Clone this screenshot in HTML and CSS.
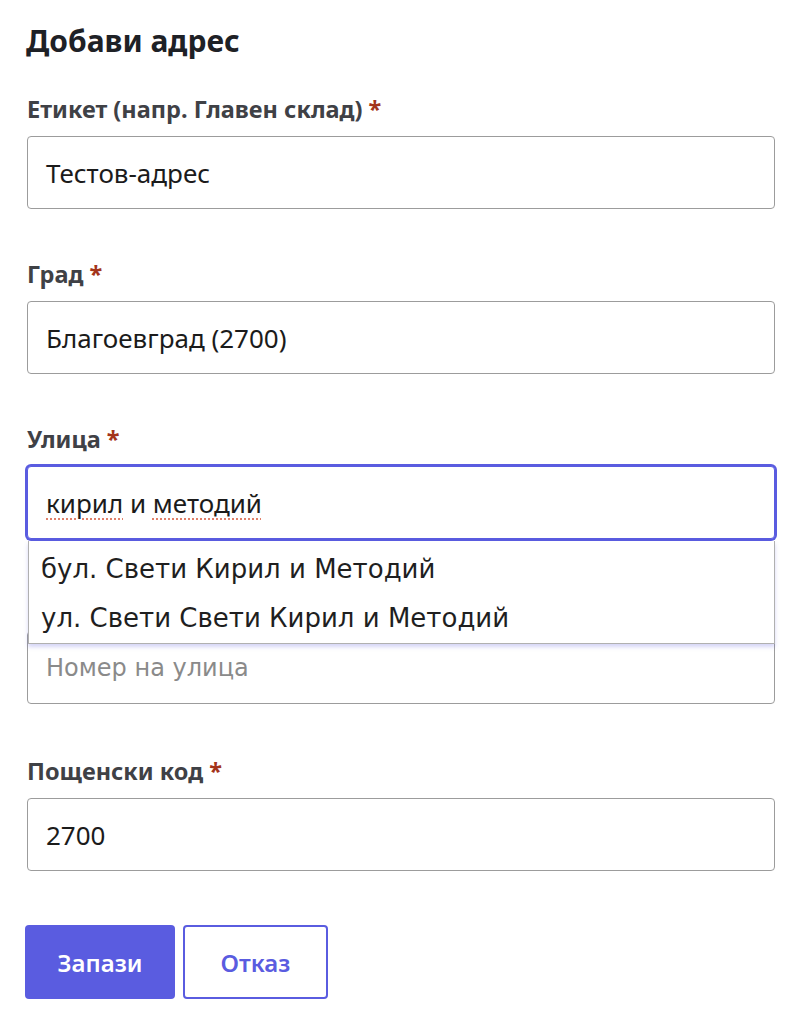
FILE: index.html
```html
<!DOCTYPE html>
<html lang="bg">
<head>
<meta charset="utf-8">
<title>Добави адрес</title>
<link rel="stylesheet" href="styles.css">
</head>
<body>
<form class="form">
  <h1 class="title">Добави адрес</h1>

  <div class="field">
    <label class="label">Етикет (напр. Главен склад) <span class="req">*</span></label>
    <div class="input"><span class="value">Тестов-адрес</span></div>
  </div>

  <div class="field">
    <label class="label">Град <span class="req">*</span></label>
    <div class="input"><span class="value">Благоевград (2700)</span></div>
  </div>

  <div class="field field-street">
    <label class="label">Улица <span class="req">*</span></label>
    <div class="input input-focus"><span class="value"><span class="spell">кирил</span> и <span class="spell">методий</span></span></div>
    <ul class="suggest" lang="ru">
      <li class="suggest-item">бул. Свети Кирил и Методий</li>
      <li class="suggest-item">ул. Свети Свети Кирил и Методий</li>
    </ul>
  </div>

  <div class="field field-number">
    <div class="input"><span class="placeholder" lang="ru">Номер на улица</span></div>
  </div>

  <div class="field">
    <label class="label">Пощенски код <span class="req">*</span></label>
    <div class="input"><span class="value">2700</span></div>
  </div>

  <div class="actions">
    <button type="button" class="btn btn-primary">Запази</button>
    <button type="button" class="btn btn-secondary">Отказ</button>
  </div>
</form>
</body>
</html>
```

FILE: styles.css
```css
html, body {
  margin: 0;
  padding: 0;
  background: #ffffff;
}

body {
  font-family: "Noto Sans", Inter, "Liberation Sans", sans-serif;
  color: #1d1f24;
}

.form {
  padding: 24px 22px 0 27px;
  display: flex;
  flex-direction: column;
}

.title {
  margin: 0 0 37px -1px;
  font-size: 30px;
  line-height: 34px;
  font-weight: 700;
  color: #1e2126;
}

.field {
  display: flex;
  flex-direction: column;
  margin-bottom: 51px;
}

.field-street {
  position: relative;
  z-index: 2;
}

.field-number {
  padding-top: 41px;
  margin-bottom: 53px;
}

.label {
  font-size: 23.5px;
  line-height: 28px;
  font-weight: 700;
  color: #3f4146;
  margin-bottom: 13px;
}

.req {
  color: #a3341b;
}

.input {
  box-sizing: border-box;
  height: 73px;
  border: 1px solid #9c9c9c;
  border-radius: 4px;
  padding: 0 18px;
  display: flex;
  align-items: center;
  background: #fff;
}

.value {
  font-size: 26px;
  color: #1b1b1b;
}

.input-focus {
  border-color: #5a5ce0;
  box-shadow: 0 0 0 2px #5a5ce0;
}

.spell {
  text-decoration: underline dotted #e0806a;
  text-decoration-thickness: 2px;
  text-underline-offset: 6px;
}

.placeholder {
  font-family: "DejaVu Sans", Verdana, sans-serif;
  font-size: 24px;
  color: #8a8a8a;
}

.suggest {
  position: absolute;
  left: 1px;
  right: 0;
  top: 116px;
  margin: 0;
  padding: 4px 0 0 0;
  list-style: none;
  background: #fff;
  border: 1px solid #b0b0b0;
  border-top: none;
  box-shadow: 0 3px 4px rgba(90, 92, 224, 0.25);
  font-family: "DejaVu Sans", Verdana, sans-serif;
}

.suggest-item {
  font-size: 26px;
  line-height: 49px;
  padding: 0 12px;
  color: #1f1f1f;
}

.actions {
  display: flex;
  gap: 8px;
  margin-top: 3px;
  margin-left: -2px;
}

.btn {
  box-sizing: border-box;
  height: 74px;
  border-radius: 4px;
  font-family: "Noto Sans", Inter, sans-serif;
  font-size: 24px;
  font-weight: 600;
  cursor: pointer;
}

.btn-primary {
  width: 150px;
  background: #5a5ce0;
  border: none;
  color: #ffffff;
}

.btn-secondary {
  width: 145px;
  background: #ffffff;
  border: 2px solid #5a5ce0;
  color: #5a5ce0;
}
```
